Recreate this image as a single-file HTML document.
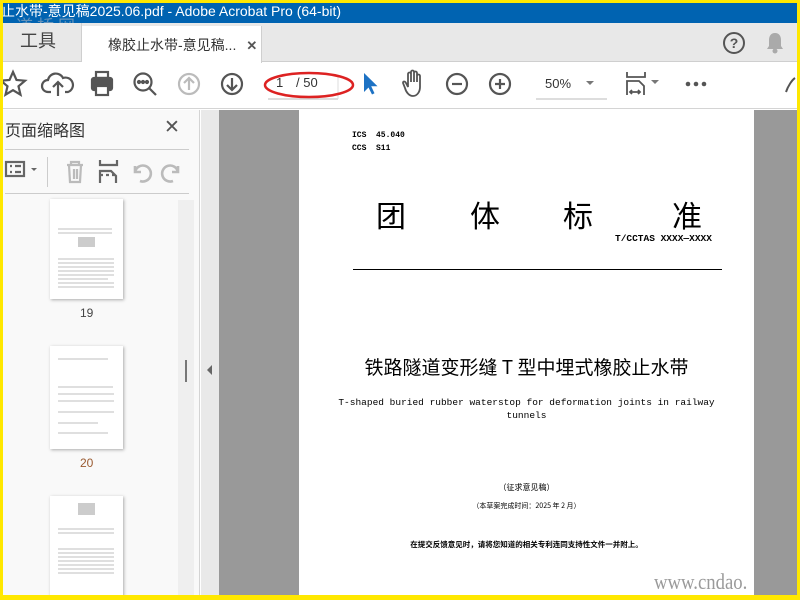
<!DOCTYPE html>
<html><head><meta charset="utf-8"><style>
*{margin:0;padding:0;box-sizing:border-box}
body{width:800px;height:600px;overflow:hidden;position:relative;background:#f00;font-family:"Liberation Sans","Noto Sans CJK SC",sans-serif}
.a{position:absolute}
.cj{font-family:"Noto Sans CJK SC",sans-serif}
</style></head><body>
<div class="a" style="left:0;top:0;width:800px;height:600px;background:#ffe800"></div>
<div class="a" style="left:3px;top:3px;width:794px;height:592px;background:#fff;overflow:hidden">
 <div class="a" style="left:0;top:0;width:794px;height:20px;background:#0063b1;color:#fff;font-size:14px;line-height:17px;white-space:nowrap">
  <span style="margin-left:-2px">止水带-意见稿2025.06.pdf - Adobe Acrobat Pro (64-bit)</span></div>
 <div class="a cj" style="left:13px;top:9px;font-size:17px;color:#a8b4c0;letter-spacing:4px;opacity:.6">道桥网</div>
 <div class="a" style="left:0;top:20px;width:794px;height:39px;background:#e8e8e8;border-bottom:1px solid #cfcfcf"></div>
 <div class="a" style="left:0;top:20px;width:79px;height:39px;border-right:1px solid #cfcfcf;font-size:18px;color:#444;line-height:36px;padding-left:17px">工具</div>
 <div class="a" style="left:79px;top:23px;width:180px;height:37px;background:#fff;border-right:1px solid #cfcfcf;font-size:14px;color:#333;line-height:38px;padding-left:26px">橡胶止水带-意见稿...<span style="margin-left:10px;font-weight:bold;color:#555;font-size:13px">✕</span></div>
 <svg class="a" style="left:719px;top:28px" width="24" height="24"><circle cx="12" cy="12" r="10" fill="none" stroke="#555" stroke-width="2"/><text x="12" y="17" font-size="14" font-weight="bold" text-anchor="middle" fill="#555" font-family="Liberation Sans">?</text></svg>
 <svg class="a" style="left:761px;top:28px" width="22" height="24"><path d="M11 2c-4 0-6 3-6 7v6l-2 3h16l-2-3V9c0-4-2-7-6-7z" fill="#aaa"/><circle cx="11" cy="20" r="2.5" fill="#aaa"/></svg>
 <div class="a" style="left:0;top:60px;width:794px;height:46px;background:#fff;border-bottom:1px solid #d4d4d4"></div>
 <svg class="a" style="left:0;top:64px" width="794" height="36" fill="none" stroke="#555" stroke-width="2.2">
  <path d="M10 5l3.5 8 8.5.7-6.5 5.6 2 8.4-7.5-4.5-7.5 4.5 2-8.4-6.5-5.6 8.5-.7z"/>
  <path d="M48 25h-3a6 6 0 0 1 0-12 8 8 0 0 1 15-2 6 6 0 0 1 5 14h-3M55 29V15m-5 5l5-5 5 5"/>
  <rect x="89" y="11" width="20" height="12" rx="2" fill="#555"/><rect x="93" y="5" width="12" height="6"/><rect x="93" y="19" width="12" height="9" fill="#fff"/>
  <circle cx="140" cy="15" r="8.5"/><path d="M146 21l7 7"/><circle cx="136" cy="15" r="1" fill="#555"/><circle cx="140" cy="15" r="1" fill="#555"/><circle cx="144" cy="15" r="1" fill="#555"/>
  <g stroke="#bbb"><circle cx="186" cy="17" r="10"/><path d="M186 23V11m-5 5l5-5 5 5"/></g>
  <circle cx="229" cy="17" r="10"/><path d="M229 11v12m-5-5l5 5 5-5"/>
  <circle cx="454" cy="17" r="10"/><path d="M449 17h10"/>
  <circle cx="497" cy="17" r="10"/><path d="M492 17h10M497 12v10"/>
  <path d="M410 29c-4 0-7-4-8-8l-2-5c0-2 2-2 3 0l2 4V7c0-2 3-2 3 0v8V5c0-2 3-2 3 0v10V6c0-2 3-2 3 0v9V9c0-2 3-2 3 0v11c0 5-3 9-7 9z" stroke-width="1.8"/>
  <path d="M624 5v5h18V5M624 28v-14h12l5 5v9M627 25h10m-8-2-2 2 2 2m6-4 2 2-2 2" stroke-width="1.8"/>
  <path d="M783 25c2-6 6-12 9-14" stroke-width="2"/>
 </svg>
 <svg class="a" style="left:0;top:58px" width="794" height="46">
  <path d="M361 12l0 19 4.5-4.5 3.5 7 2.5-1.2-3.3-7 6.3 0z" fill="#1d72c4"/>
  <path d="M583 20l4 4 4-4z M648 19l4 4 4-4z" fill="#777"/>
  <circle cx="685" cy="23" r="2.3" fill="#555"/><circle cx="693" cy="23" r="2.3" fill="#555"/><circle cx="701" cy="23" r="2.3" fill="#555"/>
  <path d="M265 38h70M533 38h71" stroke="#bbb"/><path d="M335 14v24" stroke="#ddd"/>
  <ellipse cx="306" cy="24" rx="44" ry="12" fill="none" stroke="#d22" stroke-width="2.5"/>
 </svg>
 <div class="a" style="left:273px;top:72px;font-size:13px;color:#333">1</div>
 <div class="a" style="left:293px;top:72px;font-size:13px;color:#333">/ 50</div>
 <div class="a" style="left:542px;top:73px;font-size:13px;color:#333">50%</div>
 <div class="a" style="left:0;top:107px;width:197px;height:485px;background:#f9f9f9;border-right:1px solid #d4d4d4"></div>
 <div class="a" style="left:2px;top:114px;font-size:16px;color:#333">页面缩略图</div>
 <div class="a" style="left:161px;top:113px;font-size:19px;color:#555">✕</div>
 <div class="a" style="left:2px;top:146px;width:184px;height:1px;background:#ccc"></div>
 <div class="a" style="left:2px;top:190px;width:184px;height:1px;background:#ccc"></div>
 <div class="a" style="left:44px;top:154px;width:1px;height:30px;background:#ccc"></div>
 <svg class="a" style="left:0;top:152px" width="190" height="34" fill="none" stroke-width="2.2">
  <rect x="3" y="7" width="18" height="14" stroke="#666"/><path d="M7 11h2M7 17h2M12 11h6M12 17h6" stroke="#666"/><path d="M28 13l3 3 3-3z" fill="#666" stroke="none"/>
  <path d="M64 10h16M68 10V7h8v3M66 10l1 17h10l1-17M71 14v10M74 14v10" stroke="#bbb"/>
  <path d="M97 5v5h17V5M97 28v-12h11l5 5v7M97 20h3m3 0h3m3 0h3" stroke="#666"/>
  <path d="M137 26a8 8 0 1 0-5-9m0-6v6h6" stroke="#bbb" stroke-width="2.6"/>
  <path d="M170 26a8 8 0 1 1 5-9m0-6v6h-6" stroke="#bbb" stroke-width="2.6"/>
 </svg>
 <div class="a" style="left:175px;top:197px;width:16px;height:395px;background:#efefef"></div>
 <div class="a" style="left:182px;top:357px;width:2px;height:22px;background:#777"></div>
 <div class="a" style="left:47px;top:196px;width:73px;height:100px;background:#fff;box-shadow:1px 1px 3px #aaa"></div>
 <div class="a" style="left:77px;top:303px;font-size:12px;color:#444">19</div>
 <div class="a" style="left:47px;top:343px;width:73px;height:103px;background:#fff;box-shadow:1px 1px 3px #aaa"></div>
 <div class="a" style="left:77px;top:453px;font-size:12px;color:#9a5a30">20</div>
 <div class="a" style="left:47px;top:493px;width:73px;height:110px;background:#fff;box-shadow:1px 1px 3px #aaa"></div>
 <svg class="a" style="left:47px;top:196px" width="73" height="400" stroke="#aaa" stroke-width=".8">
  <path d="M8 30h54M8 34h54M8 60h56M8 64h56M8 68h56M8 72h56M8 76h56M8 80h50M8 84h56M8 88h56"/>
  <rect x="28" y="38" width="17" height="10" fill="#ccc" stroke="none"/>
  <path d="M8 160h50M8 188h55M8 195h56M8 202h56M8 213h56M8 224h40M8 234h50"/>
  <path d="M8 330h56M8 334h56M8 350h56M8 354h56M8 358h56M8 362h56M8 366h56M8 370h56M8 374h56"/>
  <rect x="28" y="304" width="17" height="12" fill="#ccc" stroke="none"/>
 </svg>
 <div class="a" style="left:198px;top:107px;width:18px;height:485px;background:#e9e9e9"></div>
 <svg class="a" style="left:203px;top:361px" width="8" height="12"><path d="M6 1L1 6l5 5z" fill="#666"/></svg>
 <div class="a" style="left:216px;top:107px;width:578px;height:485px;background:#999"></div>
 <div class="a" style="left:296px;top:107px;width:455px;height:485px;background:#fff"></div>
 <div class="a" style="left:349px;top:126px;font-size:8px;color:#000;font-family:'Liberation Mono',monospace;line-height:13px;font-weight:bold">ICS&nbsp; 45.040<br>CCS&nbsp; S11</div>
 <div class="a cj" style="left:373px;top:191px;font-size:30px;color:#000;line-height:40px;white-space:nowrap">团<span style="margin-left:64px">体</span><span style="margin-left:63px">标</span><span style="margin-left:79px">准</span></div>
 <div class="a" style="left:612px;top:230px;font-size:9.5px;color:#000;font-family:'Liberation Mono',monospace;font-weight:bold">T/CCTAS XXXX—XXXX</div>
 <div class="a" style="left:350px;top:266px;width:369px;height:1px;background:#000"></div>
 <div class="a cj" style="left:296px;top:350px;width:455px;text-align:center;font-size:19px;color:#000">铁路隧道变形缝 T 型中埋式橡胶止水带</div>
 <div class="a" style="left:296px;top:393px;width:455px;text-align:center;font-size:9.5px;line-height:13px;color:#000;font-family:'Liberation Mono',monospace">T-shaped buried rubber waterstop for deformation joints in railway<br>tunnels</div>
 <div class="a cj" style="left:296px;top:479px;width:455px;text-align:center;font-size:8px;color:#000">（征求意见稿）</div>
 <div class="a cj" style="left:296px;top:498px;width:455px;text-align:center;font-size:7px;color:#000">（本草案完成时间：2025 年 2 月）</div>
 <div class="a cj" style="left:296px;top:536px;width:455px;text-align:center;font-size:7.5px;color:#000;font-weight:bold">在提交反馈意见时，请将您知道的相关专利连同支持性文件一并附上。</div>
 <div class="a" style="left:651px;top:566px;font-size:22px;color:#9a9a9a;font-family:'Liberation Serif',serif;transform:scaleX(.85);transform-origin:left">www.cndao.</div>
</div>
</body></html>
